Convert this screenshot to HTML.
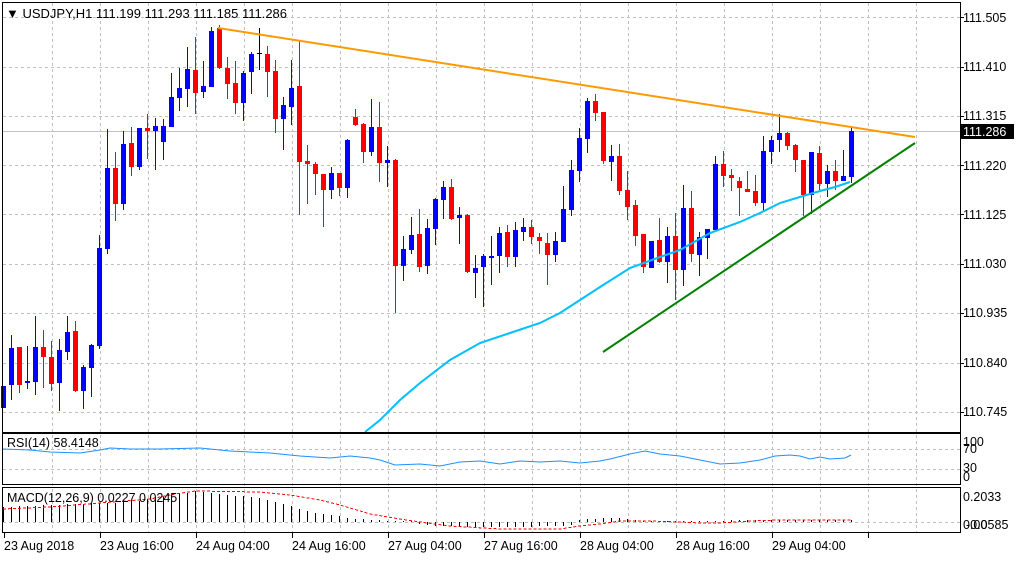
<!DOCTYPE html>
<html><head><meta charset="utf-8"><style>
html,body{margin:0;padding:0;background:#fff;}
body{width:1020px;height:556px;overflow:hidden;font-family:"Liberation Sans",sans-serif;}
svg text{font-family:"Liberation Sans",sans-serif;font-size:12.5px;fill:#000;}
</style></head><body>
<svg id="s" width="1020" height="556" xmlns="http://www.w3.org/2000/svg" shape-rendering="crispEdges">
<rect width="1020" height="556" fill="#fff"/>
<g id="grid" stroke="#c0c0c0" stroke-dasharray="3,3" stroke-width="1"></g>
<line x1="3" y1="131.5" x2="960" y2="131.5" stroke="#c0c0c0"/>
<g id="candles"></g>
<polyline shape-rendering="auto" fill="none" stroke="#00BFFF" stroke-width="2" points="365,432 380,420 400,400 420,383 450,360 480,343 510,333 540,323 560,313 580,300 600,287 630,268 660,257 680,250 710,233 740,222 760,213 780,203 813,193 835,187 850,182"/>
<line shape-rendering="auto" x1="218" y1="28" x2="915" y2="137" stroke="#FF9900" stroke-width="2"/>
<line shape-rendering="auto" x1="603" y1="352" x2="915" y2="143" stroke="#008000" stroke-width="2"/>
<polyline shape-rendering="auto" fill="none" stroke="#1E90FF" stroke-width="1" points="3,449 30,450 50,452 80,453 100,450 110,448 130,449 160,449 200,448 230,451 270,453 300,456 330,458 350,456 370,458 380,460 395,465 420,464 440,466 460,462 480,461 500,464 520,461 540,462 560,461 580,463 600,461 610,459 630,454 645,451 660,454 680,456 700,460 720,464 740,463 760,460 775,456 790,455 800,456 810,459 820,457 830,459 845,458 851,455"/>
<g id="macd" stroke="#000"></g>
<polyline fill="none" stroke="#FF0000" stroke-dasharray="3,2" points="3,509 50,507 100,503 150,499 175,494 195,491 260,492 290,495 320,500 340,505 370,514 400,519 420,522 450,526 500,529 560,529 580,526 600,524 620,521 650,521 680,522 700,523 720,523 750,521 780,520 851,520"/>
<g fill="none" stroke="#000" stroke-width="1">
<rect x="2.5" y="2.5" width="958" height="430"/>
<rect x="2.5" y="433.5" width="958" height="51"/>
<rect x="2.5" y="487.5" width="958" height="45"/>
</g>
<g id="ticks" stroke="#000"></g>
<text x="6" y="18" style="font-size:13px">&#9660; USDJPY,H1  111.199 111.293 111.185 111.286</text>
<text x="7" y="447">RSI(14) 58.4148</text>
<text x="7" y="502">MACD(12,26,9) 0.0227 0.0245</text>
<g id="axis"></g>
<rect x="960" y="124" width="54" height="15" fill="#000"/>
<text x="963" y="136" style="fill:#fff">111.286</text>
<text x="963" y="446">100</text><text x="963" y="453">70</text>
<text x="963" y="472">30</text><text x="963" y="481">0</text>
<text x="963" y="501">0.2033</text>
<text x="963" y="529">0.00</text><text x="966" y="529">-0.0585</text>
<text x="4" y="550">23 Aug 2018</text>
<text x="100" y="550">23 Aug 16:00</text>
<text x="196" y="550">24 Aug 04:00</text>
<text x="292" y="550">24 Aug 16:00</text>
<text x="388" y="550">27 Aug 04:00</text>
<text x="484" y="550">27 Aug 16:00</text>
<text x="580" y="550">28 Aug 04:00</text>
<text x="676" y="550">28 Aug 16:00</text>
<text x="772" y="550">29 Aug 04:00</text>
</svg>
<script>
var NS="http://www.w3.org/2000/svg";
function el(p,t,a){var e=document.createElementNS(NS,t);for(var k in a)e.setAttribute(k,a[k]);document.getElementById(p).appendChild(e);return e;}
var hy=[17,67,116,165,214,264,313,363,412];
hy.forEach(function(y){el("grid","line",{x1:3,y1:y+.5,x2:960,y2:y+.5});});
[449,469,522].forEach(function(y){el("grid","line",{x1:3,y1:y+.5,x2:960,y2:y+.5});});
for(var x=52;x<960;x+=48){el("grid","line",{x1:x+.5,y1:3,x2:x+.5,y2:532});}
var labs=["111.505","111.410","111.315","111.220","111.125","111.030","110.935","110.840","110.745"];
var ly=[22,71,120,170,219,268,317,367,416];
labs.forEach(function(l,i){var t=el("axis","text",{x:963,y:ly[i]});t.textContent=l;el("axis","line",{x1:960,y1:hy[i]+.5,x2:964,y2:hy[i]+.5,stroke:"#000"});});
for(var x=4;x<960;x+=96){el("ticks","line",{x1:x+.5,y1:532,x2:x+.5,y2:538});}
var C=[
["b",386,408,386,408],["b",348,385,335,400],["r",347,385,347,393],["b",381,383,346,389],["b",347,382,316,395],
["r",347,357,330,388],["r",357,384,341,391],["b",350,383,339,411],["b",332,352,316,360],["r",331,391,321,392],
["b",367,391,365,409],["b",345,368,344,397],["b",248,346,235,349],["b",168,249,129,254],["r",168,204,152,221],
["b",144,204,131,210],["r",143,167,127,176],["b",128,167,128,170],["r",128,131,114,159],["b",126,131,118,170],
["b",126,142,119,160],["b",97,127,73,127],["b",88,98,68,111],["b",69,89,47,107],["r",70,93,37,114],
["b",86,92,61,98],["b",31,87,27,87],["r",28,68,25,69],["r",68,84,57,99],["r",83,103,61,114],
["b",73,103,71,121],["b",54,72,52,94],["k",53,54,28,70],["r",54,72,46,97],["r",71,119,60,133],
["b",105,119,97,150],["b",88,107,60,125],["r",86,162,40,215],["r",161,164,145,204],["r",164,174,162,195],
["r",174,190,174,227],["b",173,190,167,199],["r",173,188,173,196],["b",140,188,139,198],["r",117,125,109,126],
["r",124,152,123,163],["b",127,152,99,156],["r",127,163,102,182],["b",160,163,146,187],["r",160,266,159,313],
["b",249,266,236,281],["b",235,250,217,254],["r",234,267,209,272],["b",228,266,219,274],["b",199,229,198,245],
["b",187,200,181,219],["r",187,219,179,220],["b",215,218,207,244],["r",215,272,214,273],["b",268,273,255,298],
["b",256,267,254,307],["b",256,257,236,285],["b",233,256,227,273],["r",232,257,225,267],["b",230,257,222,267],
["b",227,232,218,241],["r",227,237,220,244],["r",237,241,233,254],["r",243,255,233,285],["b",241,255,232,262],
["b",209,242,186,242],["b",170,210,160,216],["b",138,171,128,182],["b",101,139,98,153],["r",101,113,94,121],
["r",112,161,112,164],["b",156,162,145,181],["r",156,191,144,195],["r",190,207,171,220],["r",205,236,200,246],
["r",234,267,234,273],["b",241,268,241,268],["r",240,262,218,263],["b",236,262,227,283],["r",236,270,213,300],
["b",208,270,185,286],["r",208,254,191,262],["b",237,255,232,276],["b",229,238,229,259],["b",164,230,156,230],
["r",164,176,151,187],["r",175,178,169,191],["r",181,188,177,216],["r",189,192,171,192],["r",191,203,175,206],
["b",151,203,136,211],["b",140,152,136,164],["b",133,140,114,152],["r",133,146,132,150],["r",145,160,144,172],
["r",160,195,160,216],["b",152,195,152,214],["r",153,184,146,190],["b",171,184,165,197],["r",171,181,160,190],
["b",176,181,150,181],["b",131,177,127,183]];
var col={b:"#0000FF",r:"#FF0000",k:"#000"};
C.forEach(function(c,i){var cx=3+8*i;var f=col[c[0]];
 el("candles","rect",{x:cx,y:c[3],width:1,height:Math.max(1,c[4]-c[3]),fill:f});
 if(c[0]=="k"){el("candles","rect",{x:cx-2,y:c[1],width:5,height:1,fill:f});}
 else el("candles","rect",{x:cx-2,y:c[1],width:5,height:Math.max(2,c[2]-c[1]),fill:f});
});
var mp=[[3,507],[100,503],[130,502],[180,494],[196,491],[230,495],[260,498],[290,506],[310,512],[330,515],[350,518],[370,520],[390,521],[410,522],[430,526],[500,527],[570,526],[580,519],[620,518],[640,521],[700,521],[750,520],[851,520]];
function interp(x){for(var i=0;i<mp.length-1;i++){if(x>=mp[i][0]&&x<=mp[i+1][0]){var t=(x-mp[i][0])/(mp[i+1][0]-mp[i][0]);return mp[i][1]+t*(mp[i+1][1]-mp[i][1]);}}return 520;}
for(var i=0;i<=106;i++){var x=3+8*i;var y=Math.round(interp(x));if(y==522)y=521;el("macd","line",{x1:x+.5,y1:522,x2:x+.5,y2:y});}
</script>
</body></html>
